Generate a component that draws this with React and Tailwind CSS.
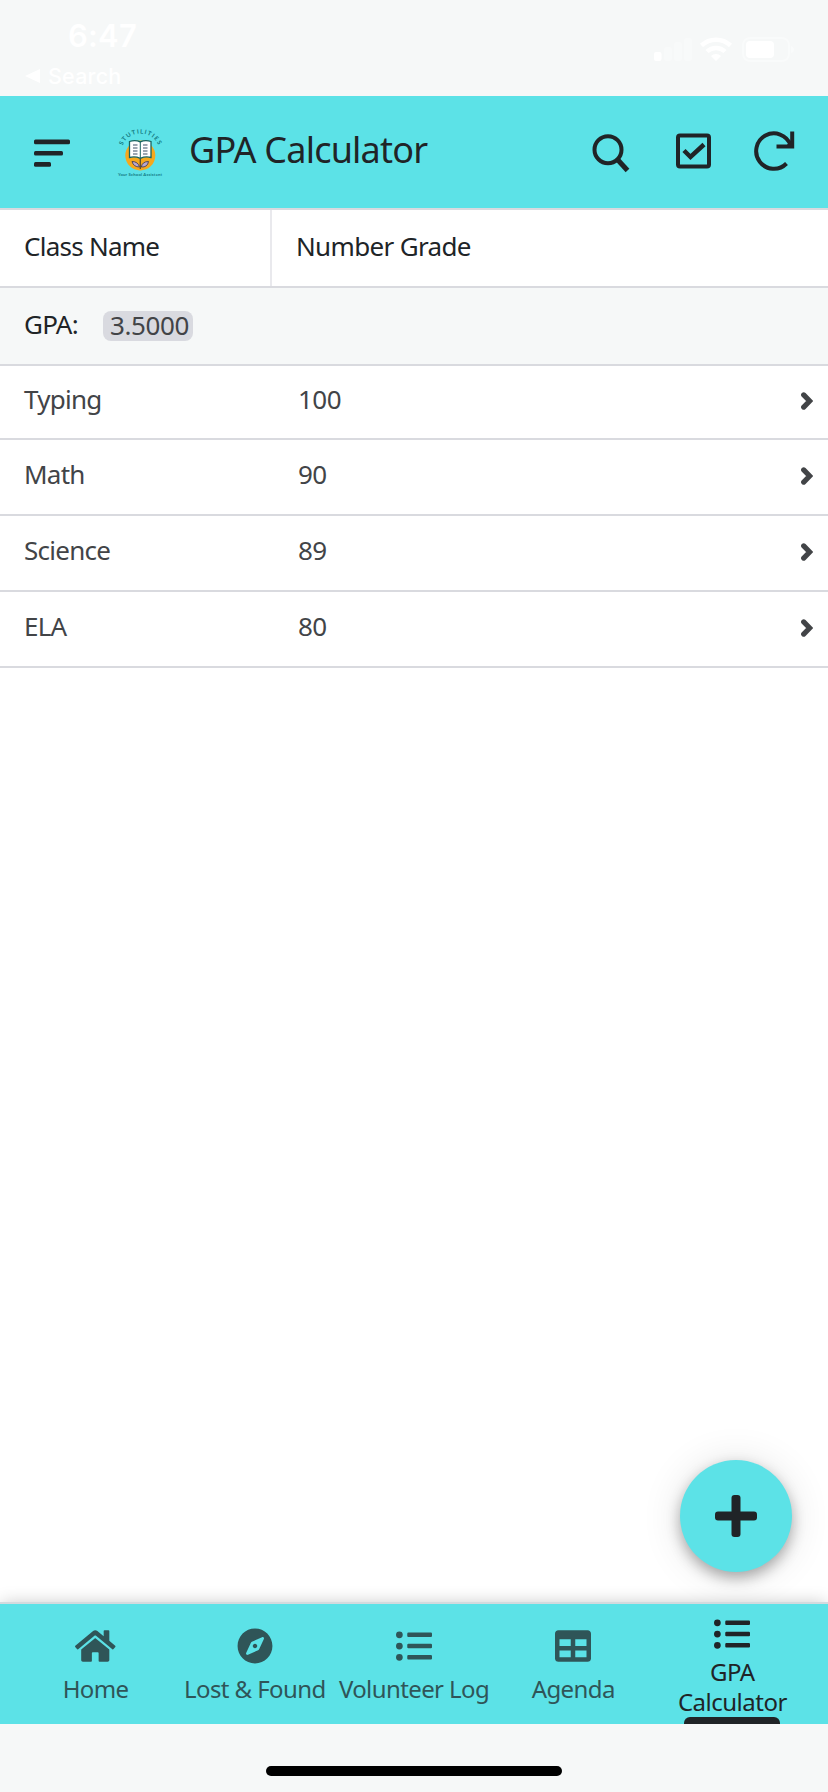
import { FaCompass, FaListUl, FaTable } from "react-icons/fa";

const classes = [
  { name: "Typing", grade: 100, height: "h-[74px]" },
  { name: "Math", grade: 90, height: "h-[76px]" },
  { name: "Science", grade: 89, height: "h-[76px]" },
  { name: "ELA", grade: 80, height: "h-[76px]" },
];

const tabs = [
  { label: "Home", icon: HomeIcon },
  { label: "Lost & Found", icon: FaCompass },
  { label: "Volunteer Log", icon: FaListUl },
  { label: "Agenda", icon: FaTable },
  { label: "GPA Calculator", icon: FaListUl, active: true },
];

function HomeIcon() {
  return (
    <svg width="40.500" height="36" viewBox="0 0 576 512" fill="currentColor">
      <path d="M488 312.700V456c0 13.300-10.700 24-24 24H348c-6.600 0-12-5.400-12-12V356c0-6.600-5.400-12-12-12h-72c-6.600 0-12 5.400-12 12v112c0 6.600-5.400 12-12 12H112c-13.300 0-24-10.700-24-24V312.700c0-3.600 1.600-7 4.400-9.300l188-154.800c4.400-3.600 10.800-3.600 15.300 0l188 154.800c2.700 2.300 4.300 5.700 4.300 9.300zm83.600-60.900L488 182.900V44.400c0-6.600-5.400-12-12-12h-56c-6.600 0-12 5.400-12 12V117l-89.500-73.700c-17.700-14.600-43.300-14.600-61 0L4.400 251.800c-5.100 4.200-5.800 11.800-1.600 16.900l25.500 31c4.200 5.100 11.800 5.800 16.900 1.600l235.200-193.700c4.400-3.600 10.800-3.600 15.300 0l235.200 193.700c5.100 4.200 12.700 3.500 16.900-1.600l25.500-31c4.200-5.200 3.400-12.700-1.700-16.900z" />
    </svg>
  );
}

function StatusBar() {
  return (
    <div className="h-24 shrink-0 flex justify-between text-white font-['Inter',sans-serif]">
      <div className="pl-[25px] pt-[18px]">
        <p className="pl-[43px] text-[31px] leading-9 font-semibold tracking-[0.2px]">6:47</p>
        <div className="mt-[9px] flex items-center gap-[7px]">
          <svg width="16" height="14" viewBox="0 0 16 14" fill="currentColor">
            <path d="M0 7 15 0v14z" />
          </svg>
          <span className="text-[21.5px] leading-[26px] font-medium tracking-[0.2px]">Search</span>
        </div>
      </div>
      <div className="pt-9 pr-[33px]">
        <svg width="143" height="28" viewBox="0 0 143 28" fill="currentColor">
          <rect x="2" y="16" width="7.500" height="9" rx="2" />
          <g opacity="0.3">
            <rect x="12" y="11" width="8" height="14" rx="2" />
            <rect x="22" y="6" width="8" height="19" rx="2" />
            <rect x="32" y="2" width="8" height="23" rx="2" />
          </g>
          <g fill="none" stroke="currentColor" strokeWidth="4.500">
            <path d="M49.500 9.500a21 21 0 0 1 29 0" />
            <path d="M55 15.500a13 13 0 0 1 18 0" />
          </g>
          <path d="M59 20a7 7 0 0 1 10 0l-5 5z" />
          <rect x="91" y="2" width="46" height="23" rx="7" fill="none" stroke="currentColor" strokeWidth="2" opacity="0.4" />
          <rect x="94" y="5" width="28" height="17" rx="4" />
          <path d="M139 10c4 1 4 6 0 7z" opacity="0.4" />
        </svg>
      </div>
    </div>
  );
}

function Logo() {
  return (
    <svg width="50" height="55" viewBox="0 0 50 55">
      <defs>
        <path id="arc" d="M7.500 19.500A19.500 19.500 0 0 1 43.500 19.500" />
      </defs>
      <text fill="#12777f" fontSize="6" fontWeight="700" fontFamily="Lato, sans-serif">
        <textPath href="#arc" textLength="45">STUTILITIES</textPath>
      </text>
      <circle cx="25.300" cy="29.500" r="15" fill="#f6a81c" />
      <path d="M14.500 15.500q5.500-2 10.800.3 5.300-2.300 10.700-.3v16q-5.400-1.500-10.700.8-5.300-2.300-10.800-.8z" fill="#fff" stroke="#17635f" strokeWidth="1.300" />
      <path d="M25.300 16v16" stroke="#17635f" strokeWidth="1" />
      <path d="M18 19h4.500M18 22h4.500M18 25h4.500M18 28h4.500M28 19h4.500M28 22h4.500M28 25h4.500M28 28h4.500" stroke="#3c5068" strokeWidth="1.100" />
      <path d="M25.300 33v10" stroke="#5c4a2c" strokeWidth="1.300" />
      <path d="M24.500 41q-6 0-7.500-5.500 6 0 7.500 5.500zM26.300 41q1-5.500 7.200-5.500-1 6-7.200 5.500z" fill="#b9a6cf" stroke="#4a3f52" strokeWidth="0.900" />
      <text x="3" y="50" textLength="44" fill="#12777f" fontSize="4.200" fontWeight="700" fontFamily="Lato, sans-serif">
        Your School Assistant
      </text>
    </svg>
  );
}

function Header() {
  return (
    <header className="h-[114px] shrink-0 flex items-center bg-[#5ce2e7] border-b-2 border-[#d9dadf] pl-[34px] pr-[33px] text-[#202427]">
      <svg className="mt-[2px]" width="36" height="28" viewBox="0 0 36 28" fill="currentColor">
        <rect y="0.500" width="36" height="4.700" rx="1.500" />
        <rect y="12" width="29" height="4.500" rx="1.500" />
        <rect y="23" width="17" height="4.700" rx="1.500" />
      </svg>
      <div className="ml-[45px] mt-[2px]">
        <Logo />
      </div>
      <h1 className="ml-[24px] -mt-[5px] text-[36px] leading-[48px] tracking-[-0.8px]">GPA Calculator</h1>
      <div className="ml-auto flex">
        <svg className="mr-[43px] overflow-visible" width="40" height="40" viewBox="0 0 40 40" fill="none" stroke="currentColor">
          <circle cx="18" cy="17.700" r="13.500" strokeWidth="4" />
          <path d="M27.500 27.500 37.500 38.500" strokeWidth="5" />
        </svg>
        <svg className="mr-[42px]" width="40" height="40" viewBox="0 0 40 40" fill="none" stroke="currentColor">
          <rect x="5" y="3.500" width="31" height="31" rx="2" strokeWidth="4" />
          <path d="M11 18.500 17.500 25 31 12.500" strokeWidth="4.500" />
        </svg>
        <svg className="overflow-visible" width="40" height="40" viewBox="0 0 40 40" fill="none" stroke="currentColor" strokeWidth="4">
          <path d="M31.500 31.500A17.700 17.700 0 1 1 35.500 13" />
          <path d="M37.200-.5V14.500H21.500" />
          <path d="M31 14.500 37 8v6.500z" fill="currentColor" strokeWidth="1" />
        </svg>
      </div>
    </header>
  );
}

function TabBar() {
  return (
    <nav className="relative h-[122px] shrink-0 flex bg-[#5ce2e7] border-t-2 border-[#d3dade] px-4 shadow-[0_-1px_16px_-2px_rgba(0,0,0,0.22)]">
      {tabs.map(({ label, icon: Icon, active }) =>
        active ? (
          <div key={label} className="relative flex-1 basis-0 flex flex-col items-center pt-[12px] text-[#202427]">
            <Icon size={36} />
            <span className="mt-[5px] w-[130px] text-center text-[24px] leading-[30px] tracking-[-0.5px]">{label}</span>
            <div className="absolute bottom-0 w-24 h-[7px] rounded-t-md bg-[#202427]" />
          </div>
        ) : (
          <div key={label} className="flex-1 basis-0 flex flex-col items-center pt-[24px] text-[#2f5558]">
            <Icon size={36} />
            <span className="mt-[10px] text-[24px] leading-[30px] tracking-[-0.6px] whitespace-nowrap">{label}</span>
          </div>
        )
      )}
    </nav>
  );
}

export default function App() {
  return (
    <div className="w-[828px] h-[1792px] flex flex-col overflow-hidden bg-[#f6f8f8] font-['Noto_Sans',sans-serif]">
      <StatusBar />
      <Header />

      <main className="relative flex-1 bg-white text-[26px] leading-9 tracking-[-0.75px] text-[#424447]">
        <div className="h-[78px] flex border-b-2 border-[#d9dadf] text-[#202427]">
          <div className="w-[272px] flex items-center border-r-2 border-[#e9e9ed] pl-6 pb-[5px]">Class Name</div>
          <div className="flex items-center pl-6 pb-[5px] tracking-[-0.65px]">Number Grade</div>
        </div>
        <div className="h-[78px] flex items-center bg-[#f6f8f8] border-b-2 border-[#d9dadf] pl-6">
          <span className="pb-[5px] w-[55px] text-[#202427]">GPA:</span>
          <span className="ml-6 h-[30px] w-[90px] flex items-center justify-center rounded-lg bg-[#d9dae0] pb-[2px] pl-[3px] tracking-[-0.4px]">3.5000</span>
        </div>
        {classes.map(c => (
          <div key={c.name} className={`${c.height} flex items-center border-b-2 border-[#d9dadf] pl-6 pr-[15px]`}>
            <span className="w-[274px] pb-[6px]">{c.name}</span>
            <span className="pb-[6px] tracking-[-0.5px]">{c.grade}</span>
            <svg className="ml-auto mb-[2px]" width="12" height="18" viewBox="0 0 12 18" fill="none" stroke="currentColor" strokeWidth="5.200" strokeLinecap="round">
              <path d="M2.700 2.900 8.700 9l-6 6.100" />
            </svg>
          </div>
        ))}

        <button className="absolute right-9 bottom-[30px] size-28 rounded-full bg-[#5ce2e7] flex items-center justify-center shadow-[0_6px_14px_rgba(0,0,0,0.3),0_2px_40px_rgba(0,0,0,0.12)]">
          <svg width="42" height="42" viewBox="0 0 42 42" fill="#202427">
            <rect x="16.500" width="9" height="42" rx="3" />
            <rect y="16.500" width="42" height="9" rx="3" />
          </svg>
        </button>
      </main>

      <TabBar />
      <footer className="relative h-[68px] shrink-0 flex justify-center pt-[42px] bg-[#f6f8f8]">
        <div className="w-[296px] h-[10px] rounded-full bg-black" />
      </footer>
    </div>
  );
}
